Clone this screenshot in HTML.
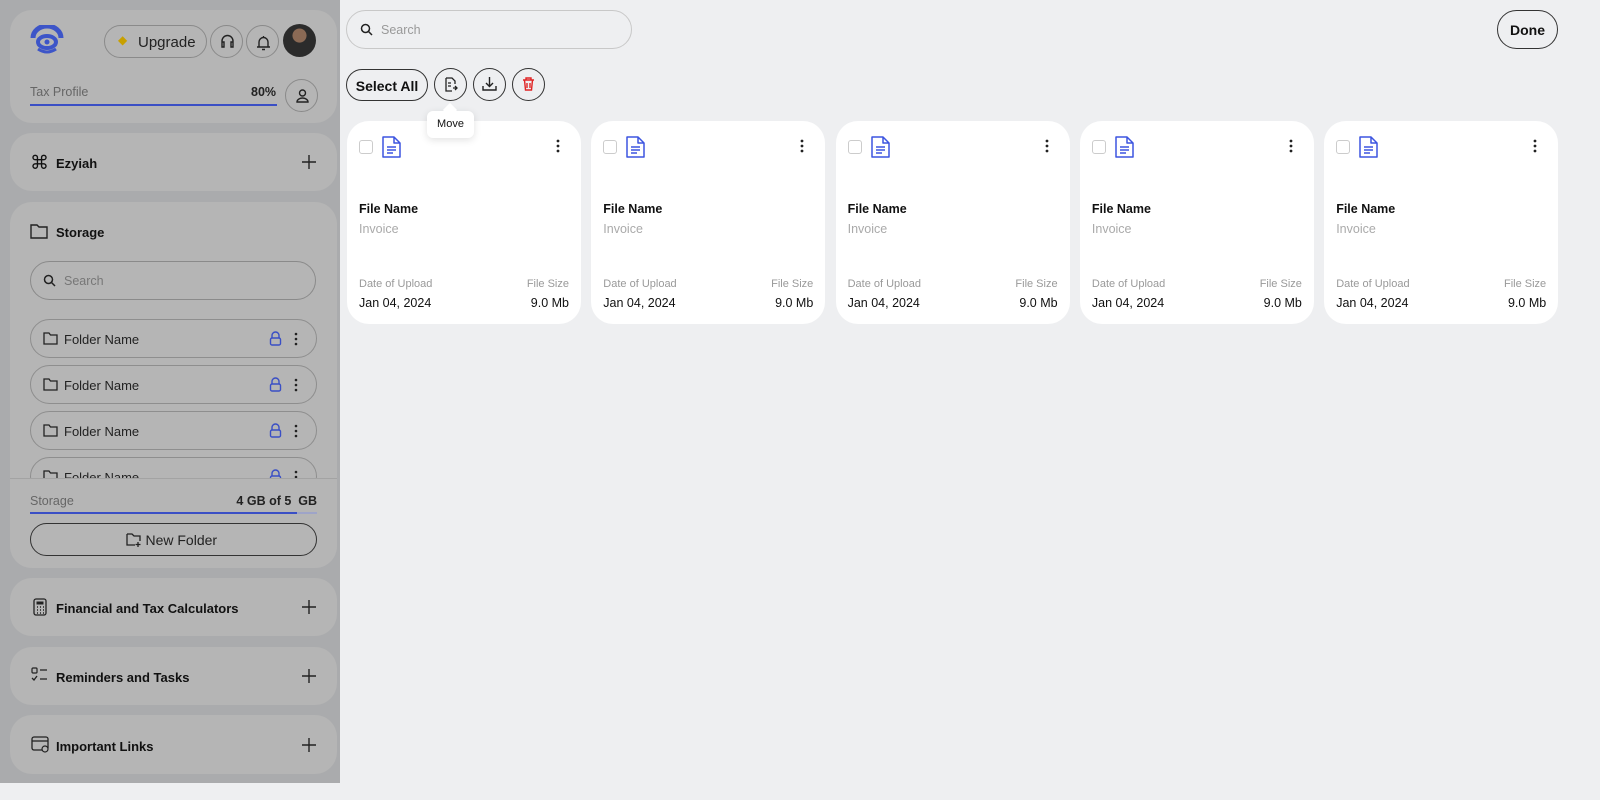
<!DOCTYPE html>
<html><head><meta charset="utf-8"><style>
*{box-sizing:border-box;margin:0;padding:0}
body{width:1600px;height:800px;background:#eeeff1;font-family:"Liberation Sans",sans-serif;color:#111;position:relative;overflow:hidden}
.side{position:absolute;left:0;top:0;width:340px;height:783px;background:#aaabad}
.card{position:absolute;left:10px;width:327px;background:#b5b5b5;border-radius:22px}
.ttl{position:absolute;left:46px;font-weight:bold;font-size:13px}
.plus{position:absolute;left:292px;top:22px}
.circ{position:absolute;border:1px solid #8a8a8a;border-radius:50%}
.fold{position:absolute;left:20px;width:287px;height:39px;border:1px solid #8e8e8e;border-radius:20px;font-size:13px}
.fold span{position:absolute;left:33px;top:12px;color:#222}
.main-btn{position:absolute;border:1px solid #333;border-radius:50%;width:33px;height:33px;top:68px;background:#eeeff1}
.fc{position:absolute;top:121px;width:234px;height:203px;background:#fff;border-radius:22px}
.fc .cb{position:absolute;left:12px;top:19px;width:14px;height:14px;border:1px solid #ccc;border-radius:3px}
.fc .fn{position:absolute;left:12px;top:81px;font-weight:bold;font-size:12.5px}
.fc .inv{position:absolute;left:12px;top:101px;color:#aaa;font-size:12.5px}
.fc .l1{position:absolute;left:12px;top:157px;color:#999;font-size:11px}
.fc .r1{position:absolute;right:12px;top:157px;color:#999;font-size:11px}
.fc .l2{position:absolute;left:12px;top:175px;font-size:12.5px}
.fc .r2{position:absolute;right:12px;top:175px;font-size:12.5px}
.fc .dots{position:absolute;left:209px;top:18px}
</style></head><body>
<div class="side">
 <div class="card" style="top:10px;height:113px">
  <svg style="position:absolute;left:20px;top:15px" width="34" height="30" viewBox="0 0 34 30"><path d="M3 13 A14 12 0 0 1 31 13" stroke="#3d55c8" stroke-width="5" fill="none"/><ellipse cx="17" cy="17" rx="9" ry="6" stroke="#3d55c8" stroke-width="4" fill="none"/><circle cx="17" cy="17" r="2.5" fill="#3d55c8"/><path d="M8 24 Q17 30 26 24" stroke="#3d55c8" stroke-width="3" fill="none"/></svg>
  <div style="position:absolute;left:94px;top:15px;width:103px;height:33px;border:1px solid #8a8a8a;border-radius:17px;font-size:15px;padding:8px 0 0 33px;color:#222">Upgrade</div>
  <div style="position:absolute;left:108px;top:23px;color:#c8a000;font-size:12px">◆</div>
  <div class="circ" style="left:200px;top:15px;width:33px;height:33px"><svg width="33" height="33" viewBox="0 0 33 33"><path d="M11 18v-3a5.5 5.5 0 0 1 11 0v3M11 16h2v5h-2zM20 16h2v5h-2z" stroke="#222" stroke-width="1.4" fill="none"/></svg></div>
  <div class="circ" style="left:236px;top:15px;width:33px;height:33px"><svg width="33" height="33" viewBox="0 0 33 33"><path d="M12 21v-5a4.5 4.5 0 0 1 9 0v5zM10 21h13M16.5 10v1.5M15 23.5h3" stroke="#222" stroke-width="1.4" fill="none"/></svg></div>
  <div style="position:absolute;left:273px;top:14px;width:33px;height:33px;border-radius:50%;background:radial-gradient(circle at 50% 35%,#8b6a55 0 25%,#2b2b2b 27% 100%)"></div>
  <div style="position:absolute;left:20px;top:75px;font-size:12.5px;color:#666">Tax Profile</div>
  <div style="position:absolute;left:241px;top:75px;font-size:12.5px;font-weight:bold;color:#222">80%</div>
  <div style="position:absolute;left:20px;top:94px;width:247px;height:2px;background:#3a4fc5"></div>
  <div class="circ" style="left:275px;top:69px;width:33px;height:33px"><svg width="33" height="33" viewBox="0 0 33 33"><circle cx="16.5" cy="13" r="3" stroke="#222" stroke-width="1.4" fill="none"/><path d="M11 22a5.5 4 0 0 1 11 0z" stroke="#222" stroke-width="1.4" fill="none"/></svg></div>
 </div>
 <div class="card" style="top:133px;height:58px">
  <div style="position:absolute;left:20px;top:19px;font-size:19px">⌘</div>
  <div class="ttl" style="top:23px">Ezyiah</div><svg class="plus" width="14" height="14"><path d="M7 0v14M0 7h14" stroke="#222" stroke-width="1.4"/></svg>
 </div>
 <div class="card" style="top:202px;height:366px;overflow:hidden">
  <svg style="position:absolute;left:20px;top:21px" width="18" height="16"><path d="M1 2h6l2 2h8v11H1z" stroke="#222" stroke-width="1.4" fill="none"/></svg>
  <div class="ttl" style="top:23px">Storage</div>
  <div style="position:absolute;left:20px;top:59px;width:286px;height:39px;border:1px solid #8a8a8a;border-radius:20px;font-size:12.5px;color:#777;padding:12px 0 0 33px">Search</div>
  <svg style="position:absolute;left:33px;top:72px" width="13" height="13"><circle cx="5.5" cy="5.5" r="4" stroke="#222" stroke-width="1.5" fill="none"/><path d="M8.5 8.5l3.5 3.5" stroke="#222" stroke-width="1.5"/></svg>
  <div class="fold" style="top:117px"><span>Folder Name</span></div>
  <div class="fold" style="top:163px"><span>Folder Name</span></div>
  <div class="fold" style="top:209px"><span>Folder Name</span></div>
  <div class="fold" style="top:255px"><span>Folder Name</span></div>
  <div style="position:absolute;left:0;top:276px;width:327px;height:90px;background:#b5b5b5;border-top:1px solid #a3a3a3"></div>
  <div style="position:absolute;left:20px;top:292px;font-size:12.5px;color:#666">Storage</div>
  <div style="position:absolute;right:20px;top:292px;font-size:12.5px;font-weight:bold;color:#222">4 GB of 5&nbsp; GB</div>
  <div style="position:absolute;left:20px;top:310px;width:287px;height:2px;background:#9ea4c8"><div style="width:267px;height:2px;background:#3a4fc5"></div></div>
  <div style="position:absolute;left:20px;top:321px;width:287px;height:33px;border:1px solid #333;border-radius:17px;font-size:14px;text-align:center;padding-top:8px;color:#222">&nbsp;&nbsp;&nbsp;&nbsp;New Folder</div>
  <svg style="position:absolute;left:116px;top:330px" width="16" height="15"><path d="M1 2h5l2 2h6v5M1 2v11h8" stroke="#222" stroke-width="1.3" fill="none"/><path d="M12 10v5M9.5 12.5h5" stroke="#222" stroke-width="1.3"/></svg>
 </div>
 <div class="card" style="top:578px;height:58px"><svg style="position:absolute;left:23px;top:20px" width="14" height="18"><rect x="1" y="1" width="12" height="16" rx="2" stroke="#222" stroke-width="1.3" fill="none"/><rect x="3.5" y="3.5" width="7" height="3" fill="#222"/><path d="M4 9h1M7 9h1M10 9h1M4 12h1M7 12h1M10 12h1M4 15h1M7 15h1M10 15h1" stroke="#222" stroke-width="1.5"/></svg><div class="ttl" style="top:23px">Financial and Tax Calculators</div><svg class="plus" width="14" height="14"><path d="M7 0v14M0 7h14" stroke="#222" stroke-width="1.4"/></svg></div>
 <div class="card" style="top:647px;height:58px"><svg style="position:absolute;left:21px;top:20px" width="18" height="16"><rect x="1" y="1" width="5" height="5" rx="1" stroke="#222" stroke-width="1.2" fill="none"/><path d="M9 3h7M9 12h7M1 11l2 2 3-4" stroke="#222" stroke-width="1.3" fill="none"/></svg><div class="ttl" style="top:23px">Reminders and Tasks</div><svg class="plus" width="14" height="14"><path d="M7 0v14M0 7h14" stroke="#222" stroke-width="1.4"/></svg></div>
 <div class="card" style="top:715px;height:59px"><svg style="position:absolute;left:21px;top:21px" width="19" height="17"><rect x="1" y="1" width="16" height="13" rx="2" stroke="#222" stroke-width="1.3" fill="none"/><path d="M1 5h16" stroke="#222" stroke-width="1.3"/><circle cx="14" cy="13" r="3" fill="#b5b5b5" stroke="#222" stroke-width="1.2"/></svg><div class="ttl" style="top:24px">Important Links</div><svg class="plus" width="14" height="14" style="top:23px"><path d="M7 0v14M0 7h14" stroke="#222" stroke-width="1.4"/></svg></div>
</div>
<div style="position:absolute;left:346px;top:10px;width:286px;height:39px;border:1px solid #c8c8c8;border-radius:20px;font-size:12.5px;color:#999;padding:12px 0 0 34px">Search</div>
<svg style="position:absolute;left:360px;top:23px" width="13" height="13"><circle cx="5.5" cy="5.5" r="4" stroke="#222" stroke-width="1.5" fill="none"/><path d="M8.5 8.5l3.5 3.5" stroke="#222" stroke-width="1.5"/></svg>
<div style="position:absolute;left:1497px;top:10px;width:61px;height:39px;border:1px solid #333;border-radius:20px;font-size:14px;font-weight:bold;text-align:center;padding-top:11px">Done</div>
<div style="position:absolute;left:346px;top:69px;width:82px;height:32px;border:1px solid #333;border-radius:17px;font-size:14px;font-weight:bold;text-align:center;padding-top:8px">Select All</div>
<div class="main-btn" style="left:434px"><svg width="31" height="31"><path d="M11 9h6l3 3v3M11 9v13h6M13 14h3M13 17h3" stroke="#222" stroke-width="1.3" fill="none"/><path d="M18 19h4M20 17l2 2-2 2" stroke="#222" stroke-width="1.3" fill="none"/></svg></div>
<div class="main-btn" style="left:473px"><svg width="31" height="31"><path d="M15.5 8v9M12 14l3.5 3.5L19 14M9 17v4h13v-4" stroke="#222" stroke-width="1.4" fill="none"/></svg></div>
<div class="main-btn" style="left:512px"><svg width="31" height="31"><path d="M10 11h11M13 11V9h5v2M11.5 11l1 10h6l1-10M14 14v5M17 14v5" stroke="#e02424" stroke-width="1.4" fill="none"/></svg></div>
<div style="position:absolute;left:427px;top:111px;width:47px;height:27px;background:#fff;border-radius:6px;box-shadow:0 2px 8px rgba(0,0,0,.12);font-size:11px;text-align:center;padding-top:7px;z-index:2">Move</div>
<div style="position:absolute;left:445px;top:105px;width:10px;height:10px;background:#fff;transform:rotate(45deg);z-index:2"></div>
<div id="cards"></div>
<script>
var h='';for(var i=0;i<5;i++){var x=347+i*244.3;h+='<div class="fc" style="left:'+x+'px"><div class="cb"></div><svg style="position:absolute;left:34px;top:14px" width="22" height="24"><path d="M2 2h11l6 6v14H2zM13 2v6h6M6 12h9M6 15h9M6 18h6" stroke="#3d55e0" stroke-width="1.5" fill="none" stroke-linejoin="round"/></svg><svg class="dots" width="4" height="14"><circle cx="2" cy="2" r="1.4" fill="#222"/><circle cx="2" cy="7" r="1.4" fill="#222"/><circle cx="2" cy="12" r="1.4" fill="#222"/></svg><div class="fn">File Name</div><div class="inv">Invoice</div><div class="l1">Date of Upload</div><div class="r1">File Size</div><div class="l2">Jan 04, 2024</div><div class="r2">9.0 Mb</div></div>';}
document.getElementById('cards').innerHTML=h;
var f=document.querySelectorAll('.fold');for(var j=0;j<f.length;j++){f[j].innerHTML+='<svg style="position:absolute;left:12px;top:12px" width="15" height="13"><path d="M1 1h5l1.5 2H14v9H1z" stroke="#222" stroke-width="1.3" fill="none"/></svg><svg style="position:absolute;left:238px;top:11px" width="13" height="15"><path d="M3 7V4.5a3.5 3.5 0 0 1 7 0V7" stroke="#3a4fc5" stroke-width="1.4" fill="none"/><rect x="1.5" y="7" width="10" height="7" rx="1.5" stroke="#3a4fc5" stroke-width="1.4" fill="none"/></svg><svg style="position:absolute;left:263px;top:12px" width="4" height="14"><circle cx="2" cy="2" r="1.3" fill="#222"/><circle cx="2" cy="7" r="1.3" fill="#222"/><circle cx="2" cy="12" r="1.3" fill="#222"/></svg>';}
</script>
</body></html>
